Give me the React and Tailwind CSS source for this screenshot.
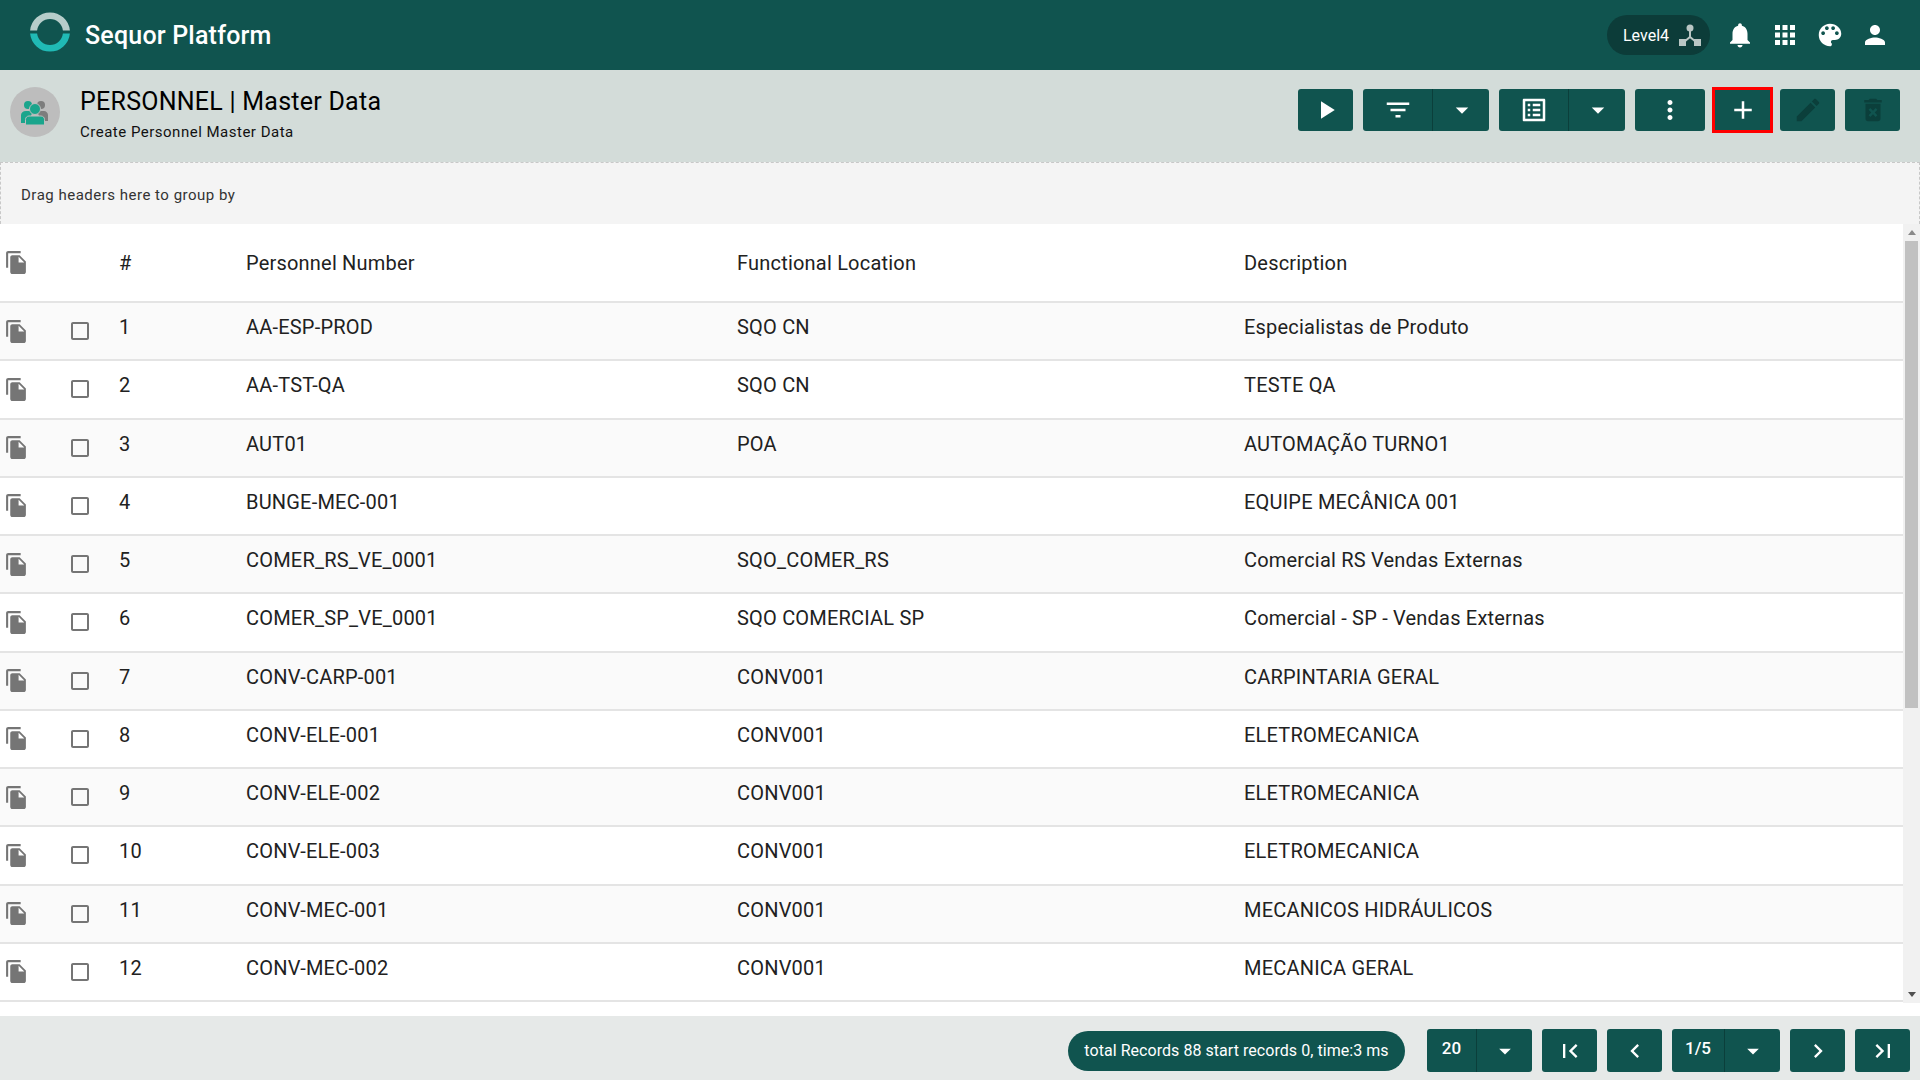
import React from "react";

const ICONS = {
  play: "M8 5v14l11-7z",
  filter: "M10 18h4v-2h-4v2zM3 6v2h18V6H3zm3 7h12v-2H6v2z",
  drop: "M7 10l5 5 5-5z",
  list: "M19 5v14H5V5h14m1.1-2H3.9c-.5 0-.9.4-.9.9v16.2c0 .4.4.9.9.9h16.2c.4 0 .9-.5.9-.9V3.9c0-.5-.5-.9-.9-.9zM11 7h6v2h-6V7zm0 4h6v2h-6v-2zm0 4h6v2h-6zM7 7h2v2H7zm0 4h2v2H7zm0 4h2v2H7z",
  more: "M12 8c1.1 0 2-.9 2-2s-.9-2-2-2-2 .9-2 2 .9 2 2 2zm0 2c-1.1 0-2 .9-2 2s.9 2 2 2 2-.9 2-2-.9-2-2-2zm0 6c-1.1 0-2 .9-2 2s.9 2 2 2 2-.9 2-2-.9-2-2-2z",
  add: "M19 13h-6v6h-2v-6H5v-2h6V5h2v6h6v2z",
  edit: "M3 17.25V21h3.75L17.81 9.94l-3.75-3.75L3 17.25zM20.71 7.04c.39-.39.39-1.02 0-1.41l-2.34-2.34c-.39-.39-1.02-.39-1.41 0l-1.83 1.83 3.75 3.75 1.83-1.83z",
  trash: "M6 19c0 1.1.9 2 2 2h8c1.1 0 2-.9 2-2V7H6v12zm2.46-7.12l1.41-1.41L12 12.59l2.12-2.12 1.41 1.41L13.41 14l2.12 2.12-1.41 1.41L12 15.41l-2.12 2.12-1.41-1.41L10.59 14l-2.13-2.12zM15.5 4l-1-1h-5l-1 1H5v2h14V4z",
  bell: "M12 22c1.1 0 2-.9 2-2h-4c0 1.1.89 2 2 2zm6-6v-5c0-3.07-1.64-5.64-4.5-6.32V4c0-.83-.67-1.5-1.5-1.5s-1.5.67-1.5 1.5v.68C7.63 5.36 6 7.92 6 11v5l-2 2v1h16v-1l-2-2z",
  apps: "M4 8h4V4H4v4zm6 12h4v-4h-4v4zm-6 0h4v-4H4v4zm0-6h4v-4H4v4zm6 0h4v-4h-4v4zm6-10v4h4V4h-4zm-6 4h4V4h-4v4zm6 6h4v-4h-4v4zm0 6h4v-4h-4v4z",
  palette: "M12 3c-4.97 0-9 4.03-9 9s4.03 9 9 9c.83 0 1.5-.67 1.5-1.5 0-.39-.15-.74-.39-1.01-.23-.26-.38-.61-.38-.99 0-.83.67-1.5 1.5-1.5H16c2.76 0 5-2.24 5-5 0-4.42-4.03-8-9-8zm-5.5 9c-.83 0-1.5-.67-1.5-1.5S5.67 9 6.5 9 8 9.67 8 10.5 7.33 12 6.5 12zm3-4C8.67 8 8 7.33 8 6.5S8.67 5 9.5 5s1.5.67 1.5 1.5S10.33 8 9.5 8zm5 0c-.83 0-1.5-.67-1.5-1.5S13.67 5 14.5 5s1.5.67 1.5 1.5S15.33 8 14.5 8zm3 4c-.83 0-1.5-.67-1.5-1.5S16.67 9 17.5 9s1.5.67 1.5 1.5-.67 1.5-1.5 1.5z",
  person: "M12 12c2.21 0 4-1.79 4-4s-1.79-4-4-4-4 1.79-4 4 1.79 4 4 4zm0 2c-2.67 0-8 1.34-8 4v2h16v-2c0-2.66-5.33-4-8-4z",
  first: "M18.41 16.59L13.82 12l4.59-4.59L17 6l-6 6 6 6zM6 6h2v12H6z",
  last: "M5.59 7.41L10.18 12l-4.59 4.59L7 18l6-6-6-6zM16 6h2v12h-2z",
  prev: "M15.41 7.41L14 6l-6 6 6 6 1.41-1.41L10.83 12z",
  next: "M10 6L8.59 7.41 13.17 12l-4.58 4.59L10 18l6-6z",
  copy: "M16 1H4c-1.1 0-2 .9-2 2v14h2V3h12V1zm-1 4l6 6v10c0 1.1-.9 2-2 2H7.99C6.89 23 6 22.1 6 21l.01-14c0-1.1.89-2 1.99-2h7zm-1 7h5.5L14 6.5V12z",
  box: "M19 5v14H5V5h14m0-2H5c-1.1 0-2 .9-2 2v14c0 1.1.9 2 2 2h14c1.1 0 2-.9 2-2V5c0-1.1-.9-2-2-2z",
};

const Icon = ({ name, className }) => (
  <svg viewBox="0 0 24 24" fill="currentColor" className={className}>
    <path d={ICONS[name]} />
  </svg>
);

const rows = [
  ["AA-ESP-PROD", "SQO CN", "Especialistas de Produto"],
  ["AA-TST-QA", "SQO CN", "TESTE QA"],
  ["AUT01", "POA", "AUTOMAÇÃO TURNO1"],
  ["BUNGE-MEC-001", "", "EQUIPE MECÂNICA 001"],
  ["COMER_RS_VE_0001", "SQO_COMER_RS", "Comercial RS Vendas Externas"],
  ["COMER_SP_VE_0001", "SQO COMERCIAL SP", "Comercial - SP - Vendas Externas"],
  ["CONV-CARP-001", "CONV001", "CARPINTARIA GERAL"],
  ["CONV-ELE-001", "CONV001", "ELETROMECANICA"],
  ["CONV-ELE-002", "CONV001", "ELETROMECANICA"],
  ["CONV-ELE-003", "CONV001", "ELETROMECANICA"],
  ["CONV-MEC-001", "CONV001", "MECANICOS HIDRÁULICOS"],
  ["CONV-MEC-002", "CONV001", "MECANICA GERAL"],
];

const Btn = ({ icon, className = "w-[55px]", iconClass = "w-[30px] h-[30px] text-white" }) => (
  <div className={`h-[42px] bg-[#10544f] rounded-[3px] flex items-center justify-center ${className}`}>
    <Icon name={icon} className={iconClass} />
  </div>
);

const SplitBtn = ({ icon }) => (
  <div className="h-[42px] w-[126px] bg-[#10544f] rounded-[3px] flex items-center text-white">
    <div className="w-[70px] h-full flex items-center justify-center border-r border-[#0b3f3b]">
      <Icon name={icon} className="w-[30px] h-[30px]" />
    </div>
    <div className="flex-1 flex items-center justify-center pl-[1px]">
      <Icon name="drop" className="w-[30px] h-[30px]" />
    </div>
  </div>
);

const PageSelect = ({ label, w, left }) => (
  <div className={`h-[43px] bg-[#10544f] rounded-[3px] flex items-center text-white ${w}`}>
    <div className={`h-full flex items-center justify-center border-r border-[#0b3f3b] pb-[4px] text-[17px] font-medium ${left}`}>
      {label}
    </div>
    <div className="flex-1 flex items-center justify-center">
      <Icon name="drop" className="w-7 h-7" />
    </div>
  </div>
);

const PageBtn = ({ icon }) => (
  <div className="h-[43px] w-[55px] bg-[#10544f] rounded-[3px] flex items-center justify-center text-white">
    <Icon name={icon} className="w-7 h-7" />
  </div>
);

const App = () => {
  return (
    <div className="w-[1920px] h-[1080px] overflow-hidden flex flex-col bg-white font-['Roboto',sans-serif]">
      <header className="h-[70px] shrink-0 bg-[#10544f] flex items-center pl-[30px] pr-[30px]">
        <svg viewBox="0 0 40 40" className="w-10 h-10 mb-[6px]">
          <path d="M0.1 18.4 A20 20 0 0 1 39.9 18.4 L32.9 18.4 A13 13 0 0 0 7.1 18.4 Z" fill="#b6cdca" />
          <path d="M0.1 21.6 A20 20 0 0 0 39.9 21.6 L32.9 21.6 A13 13 0 0 1 7.1 21.6 Z" fill="#20bab5" />
        </svg>
        <span className="ml-[15px] text-white text-[25px] font-medium tracking-[0.2px] mt-[2px]">Sequor Platform</span>
        <div className="ml-auto flex items-center">
          <div className="w-[103px] h-10 rounded-[20px] bg-[#0c3c39] flex items-center pl-[16px] gap-[10px]">
            <span className="text-white text-[16px] mt-[1px]">Level4</span>
            <svg viewBox="0 0 22 22" className="w-[22px] h-[22px]" fill="#b9c6c4">
              <circle cx="11" cy="4" r="3.5" />
              <path d="M10 6h2v6.500l6 5-1.300 1.500-5.700-4.700-5.700 4.700L4 17.500l6-5z" />
              <rect x="0" y="15" width="7" height="7" />
              <rect x="15" y="15" width="7" height="7" />
            </svg>
          </div>
          <div className="flex items-center gap-[15px] ml-[15px] text-white">
            <Icon name="bell" className="w-[30px] h-[30px]" />
            <Icon name="apps" className="w-[30px] h-[30px]" />
            <Icon name="palette" className="w-[30px] h-[30px]" />
            <Icon name="person" className="w-[30px] h-[30px]" />
          </div>
        </div>
      </header>

      <div className="h-[92px] shrink-0 bg-[#d3dcd9] flex items-center pl-[10px] pr-[20px] pb-[8px]">
        <div className="w-[50px] h-[50px] rounded-full bg-[#bdbdbd] flex items-center justify-center">
          <svg viewBox="0 0 30 30" className="w-[30px] h-[30px] mt-[3px]">
            <circle cx="21" cy="6" r="4" fill="#7d7d7d" />
            <path d="M17 12h7c2 0 4 2 4 4v6h-7z" fill="#7d7d7d" />
            <circle cx="8" cy="6" r="4" fill="#1aa58c" />
            <path d="M6 12h7l-5 12H1v-8c0-2 2-4 5-4z" fill="#1aa58c" />
            <circle cx="15" cy="10" r="5.500" fill="#1aa58c" stroke="#bdbdbd" strokeWidth="1" />
            <path d="M9 17h12c2 0 3.500 1.500 3.500 3.500V26h-19v-5.500C5.500 18.500 7 17 9 17z" fill="#1aa58c" stroke="#bdbdbd" strokeWidth="1" />
          </svg>
        </div>
        <div className="ml-[20px] text-black mt-[4px]">
          <div className="text-[25px] leading-[30px] tracking-[0.25px]">PERSONNEL | Master Data</div>
          <div className="text-[15px] leading-[20px] mt-[5px] tracking-[0.5px] text-[#111]">Create Personnel Master Data</div>
        </div>
        <div className="ml-auto flex items-center gap-[10px] mb-[5px]">
          <Btn icon="play" />
          <SplitBtn icon="filter" />
          <SplitBtn icon="list" />
          <Btn icon="more" className="w-[70px]" />
          <Btn icon="add" className="w-[57px] -mx-[1px] rounded-none outline-[3px] -outline-offset-1 outline-[#ff0000]" />
          <Btn icon="edit" iconClass="w-[30px] h-[30px] text-[#0b3f3b]" />
          <Btn icon="trash" iconClass="w-[30px] h-[30px] text-[#0b3f3b]" />
        </div>
      </div>

      <div className="h-[62px] shrink-0 bg-[#f4f4f4] border-t border-l border-r border-dashed border-[#c8c8c8] flex items-center pl-[20px] pt-[4px] text-[15px] tracking-[0.5px] text-[#333]">
        Drag headers here to group by
      </div>

      <div className="flex-1 min-h-0 flex">
        <div className="flex-1 min-w-0 overflow-hidden text-[20px] tracking-[0.2px] text-[#212121]">
          <div className="h-[79px] flex items-center border-b-2 border-[#e4e4e4]">
            <Icon name="copy" className="w-[25px] h-[25px] ml-[4px] mb-[1px] text-[#757575]" />
            <span className="ml-[90px] w-[127px]">#</span>
            <span className="w-[491px]">Personnel Number</span>
            <span className="w-[507px]">Functional Location</span>
            <span>Description</span>
          </div>
          {rows.map((r, i) => (
            <div
              key={r[0]}
              className={`h-[58.25px] flex items-center border-b-2 border-[#e4e4e4] ${i % 2 === 0 ? "bg-[#fafafa]" : "bg-white"}`}
            >
              <Icon name="copy" className="w-[25px] h-[25px] ml-[4px] text-[#757575] shrink-0" />
              <Icon name="box" className="w-6 h-6 ml-[39px] text-[#757575] shrink-0" />
              <span className="ml-[27px] w-[127px] pb-[8px]">{i + 1}</span>
              <span className="w-[491px] pb-[8px]">{r[0]}</span>
              <span className="w-[507px] pb-[8px]">{r[1]}</span>
              <span className="pb-[8px]">{r[2]}</span>
            </div>
          ))}
        </div>
        <div className="w-[17px] h-[779px] shrink-0 bg-[#f1f1f1] flex flex-col items-center">
          <div className="w-0 h-0 mt-[6px] border-l-[4px] border-r-[4px] border-b-[5px] border-l-transparent border-r-transparent border-b-[#8a8a8a]" />
          <div className="w-[13px] h-[467px] mt-[6px] bg-[#c1c1c1]" />
          <div className="w-0 h-0 mt-auto mb-[6px] border-l-[4px] border-r-[4px] border-t-[5px] border-l-transparent border-r-transparent border-t-[#505050]" />
        </div>
      </div>

      <footer className="h-16 shrink-0 bg-[#e6e9e8] flex items-center justify-end gap-[10px] pr-[10px] pt-[5px]">
        <div className="w-[337px] h-10 rounded-[20px] bg-[#10544f] text-white text-[16px] tracking-[0.05px] flex items-center justify-center mr-[12px]">
          total Records 88 start records 0, time:3 ms
        </div>
        <PageSelect label="20" w="w-[105px]" left="w-[50px]" />
        <PageBtn icon="first" />
        <PageBtn icon="prev" />
        <PageSelect label="1/5" w="w-[108px]" left="w-[53px]" />
        <PageBtn icon="next" />
        <PageBtn icon="last" />
      </footer>
    </div>
  );
};

export default App;
